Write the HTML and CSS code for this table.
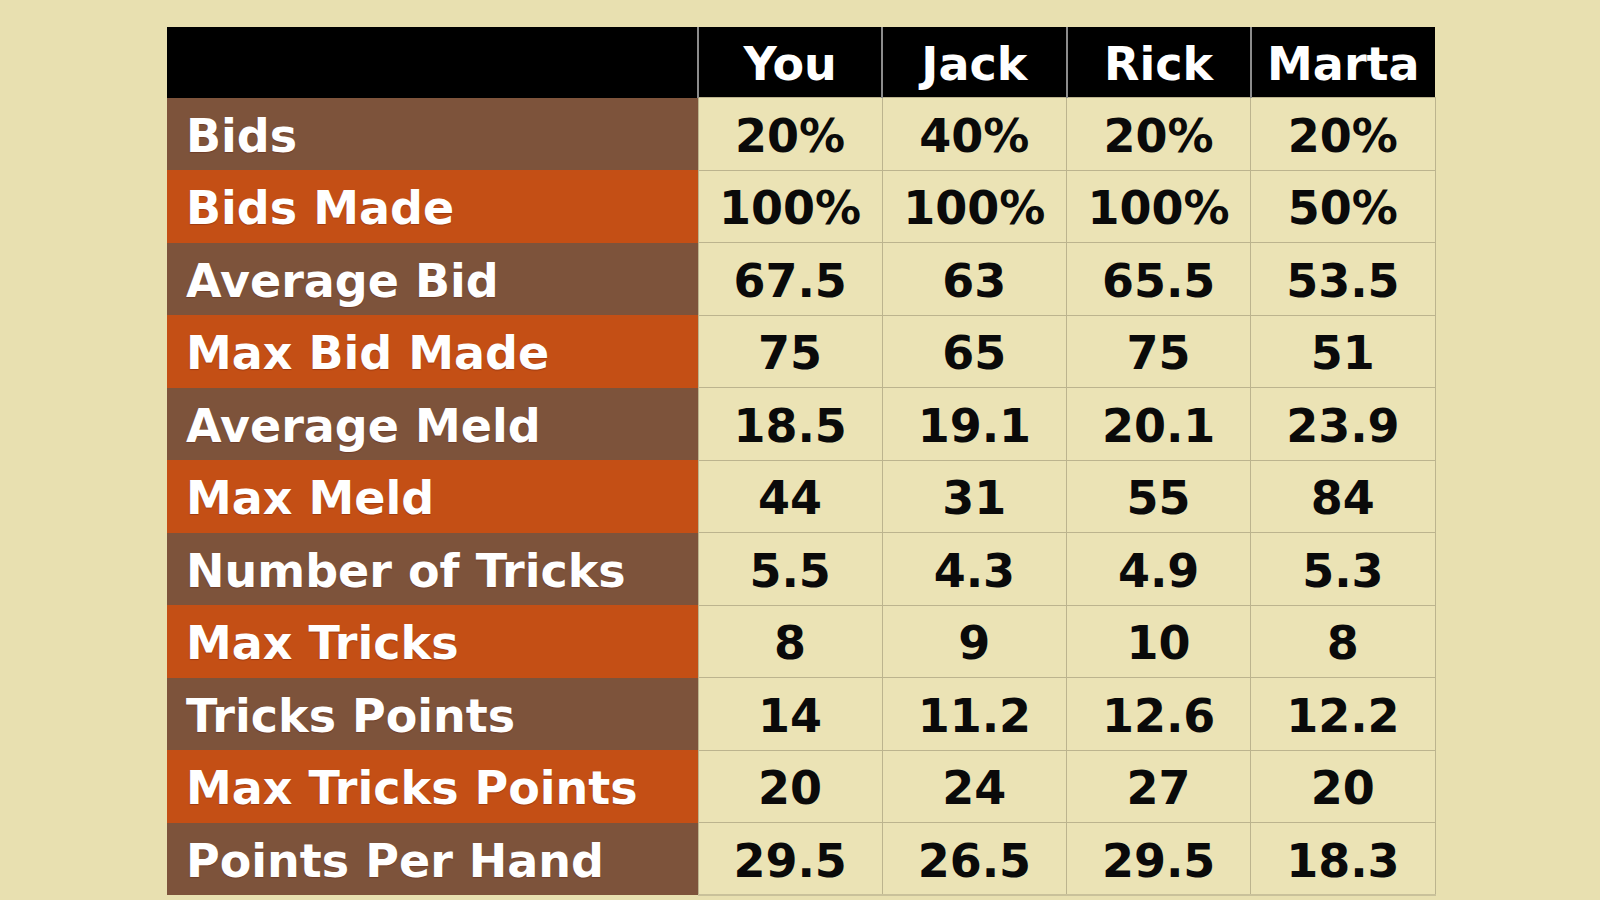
FILE: index.html
```html
<!DOCTYPE html>
<html>
<head>
<meta charset="utf-8">
<link rel="stylesheet" href="styles.css">
</head>
<body>
<div class="page">
<table class="stats">
  <colgroup>
    <col class="c-label"><col class="c-data"><col class="c-data"><col class="c-data"><col class="c-data">
  </colgroup>
  <thead>
    <tr><th class="blank"></th><th>You</th><th>Jack</th><th>Rick</th><th>Marta</th></tr>
  </thead>
  <tbody>
    <tr class="odd"><th>Bids</th><td>20%</td><td>40%</td><td>20%</td><td>20%</td></tr>
    <tr class="even"><th>Bids Made</th><td>100%</td><td>100%</td><td>100%</td><td>50%</td></tr>
    <tr class="odd"><th>Average Bid</th><td>67.5</td><td>63</td><td>65.5</td><td>53.5</td></tr>
    <tr class="even"><th>Max Bid Made</th><td>75</td><td>65</td><td>75</td><td>51</td></tr>
    <tr class="odd"><th>Average Meld</th><td>18.5</td><td>19.1</td><td>20.1</td><td>23.9</td></tr>
    <tr class="even"><th>Max Meld</th><td>44</td><td>31</td><td>55</td><td>84</td></tr>
    <tr class="odd"><th>Number of Tricks</th><td>5.5</td><td>4.3</td><td>4.9</td><td>5.3</td></tr>
    <tr class="even"><th>Max Tricks</th><td>8</td><td>9</td><td>10</td><td>8</td></tr>
    <tr class="odd"><th>Tricks Points</th><td>14</td><td>11.2</td><td>12.6</td><td>12.2</td></tr>
    <tr class="even"><th>Max Tricks Points</th><td>20</td><td>24</td><td>27</td><td>20</td></tr>
    <tr class="odd"><th>Points Per Hand</th><td>29.5</td><td>26.5</td><td>29.5</td><td>18.3</td></tr>
  </tbody>
</table>
</div>
</body>
</html>
```
FILE: styles.css
```css
html, body {
  margin: 0;
  padding: 0;
  background: #e8e0b0;
  height: 100%;
  overflow: hidden;
}
.page {
  padding: 27px 0 0 167px;
}
.stats {
  border-collapse: collapse;
  table-layout: fixed;
  width: 1268px;
  font-family: "DejaVu Sans", sans-serif;
  font-weight: bold;
  font-size: 46px;
}
.c-label { width: 531px; }
.c-data { width: 184.25px; }
.stats thead th {
  background: #000;
  color: #fff;
  height: 66px;
  padding: 4px 0 0 0;
  text-align: center;
  border-left: 2px solid #8c8c8c;
  line-height: 1;
}
.stats thead th.blank { border-left: none; }
.stats tbody th {
  height: 68.5px;
  padding: 4px 0 0 19px;
  text-align: left;
  color: #fff;
  font-weight: bold;
  line-height: 1;
  white-space: nowrap;
  text-shadow: 0 1px 1px rgba(90, 20, 10, 0.35);
}
.stats tbody tr.odd th { background: #7d533b; }
.stats tbody tr.even th { background: #c44f15; }
.stats tbody td {
  background: #ebe3b5;
  color: #0a0a0a;
  text-align: center;
  padding: 4px 0 0 0;
  line-height: 1;
  border: 1px solid #bcb48e;
}
.stats tbody tr:last-child td { border-bottom: 2px solid #c9c19a; }
```
